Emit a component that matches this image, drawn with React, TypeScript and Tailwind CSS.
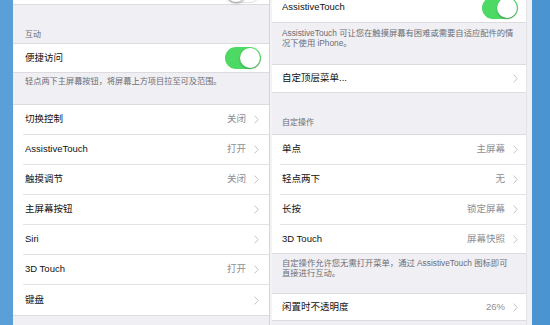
import React from "react";

function Toggle({ on }: { on: boolean }) {
  return on ? (
    <div className="relative h-[22px] w-[36px] shrink-0 rounded-full bg-[#4cd964]">
      <div className="absolute right-[1px] top-[1px] h-[20px] w-[20px] rounded-full bg-white shadow-[0_1px_2px_rgba(0,0,0,0.3)]" />
    </div>
  ) : (
    <div className="relative h-[22px] w-[36px] shrink-0 rounded-full border border-[#e2e2e6] bg-white">
      <div className="absolute left-[0px] top-[0px] h-[20px] w-[20px] rounded-full bg-white shadow-[0_1px_3px_rgba(0,0,0,0.45)]" />
    </div>
  );
}

function Chevron() {
  return (
    <svg width="5" height="9" viewBox="0 0 5 9" className="shrink-0">
      <path d="M0.6 0.6 L4.2 4.5 L0.6 8.4" fill="none" stroke="#c4c4c9" strokeWidth="1" />
    </svg>
  );
}

type RowProps = {
  label: string;
  value?: string;
  chevron?: boolean;
  toggle?: boolean;
  h: string;
  last?: boolean;
  side: "l" | "r";
};

function Row({ label, value, chevron = true, toggle, h, last, side }: RowProps) {
  const pl = side === "l" ? "pl-[10px]" : "pl-[8px]";
  const inner = side === "l" ? "pl-[2px] pr-[10px]" : "pl-[2px] pr-[8px]";
  return (
    <div className={`bg-white ${pl} ${h} ${last ? "border-b border-[#dcdce0]" : ""}`}>
      <div
        className={`flex h-full items-center ${inner} ${last ? "" : "border-b border-[#e3e3e7]"}`}
      >
        <span className="flex-1 text-[9.5px] text-[#111]">{label}</span>
        {value && <span className="mr-[8px] text-[9.5px] text-[#8e8e93]">{value}</span>}
        {toggle !== undefined ? <Toggle on={toggle} /> : chevron ? <Chevron /> : null}
      </div>
    </div>
  );
}

export default function App() {
  return (
    <div className="flex h-[325px] w-[550px] overflow-hidden font-['Liberation_Sans','Noto_Sans_CJK_SC',sans-serif]">
      <div className="w-[13px] shrink-0 bg-[#5a9fd8]" />

      {/* Left panel */}
      <div className="flex w-[256px] shrink-0 flex-col overflow-hidden bg-[#efeff4]">
        <div className="-mt-[26px] flex h-[31px] shrink-0 items-center justify-end border-b border-[#dcdce0] bg-white pr-[8px]">
          <div className="pt-[6px]">
            <Toggle on={false} />
          </div>
        </div>
        <div className="flex h-[38px] shrink-0 items-end pb-[2px] pl-[12px] text-[8px] text-[#6d6d72]">
          互动
        </div>
        <div className="flex h-[30px] shrink-0 items-center border-y border-[#dcdce0] bg-white pl-[12px] pr-[8px]">
          <span className="flex-1 text-[9.5px] text-[#111]">便捷访问</span>
          <Toggle on={true} />
        </div>
        <div className="h-[31px] shrink-0 pl-[12px] pt-[4px] text-[8.2px] leading-[10px] text-[#6d6d72]">
          轻点两下主屏幕按钮，将屏幕上方项目拉至可及范围。
        </div>
        <div className="border-t border-[#dcdce0]">
          <Row side="l" h="h-[30px]" label="切换控制" value="关闭" />
          <Row side="l" h="h-[30px]" label="AssistiveTouch" value="打开" />
          <Row side="l" h="h-[30px]" label="触摸调节" value="关闭" />
          <Row side="l" h="h-[30px]" label="主屏幕按钮" />
          <Row side="l" h="h-[30px]" label="Siri" />
          <Row side="l" h="h-[30px]" label="3D Touch" value="打开" />
          <Row side="l" h="h-[31px]" label="键盘" last />
        </div>
      </div>

      <div className="w-[3px] shrink-0 border-l border-[#d6d6da] bg-[#f3f3f5]" />

      {/* Right panel */}
      <div className="flex w-[254px] shrink-0 flex-col overflow-hidden bg-[#efeff4]">
        <div className="-mt-[7px] flex h-[30px] shrink-0 items-center border-b border-[#dcdce0] bg-white pl-[10px] pr-[8px]">
          <span className="flex-1 text-[9.5px] text-[#111]">AssistiveTouch</span>
          <Toggle on={true} />
        </div>
        <div className="h-[41px] shrink-0 pl-[10px] pr-[6px] pt-[6px] text-[8.3px] leading-[9.5px] text-[#6d6d72]">
          AssistiveTouch 可让您在触摸屏幕有困难或需要自适应配件的情况下使用 iPhone。
        </div>
        <div className="flex h-[29px] shrink-0 items-center border-y border-[#dcdce0] bg-white pl-[10px] pr-[8px]">
          <span className="flex-1 text-[9.5px] text-[#111]">自定顶层菜单...</span>
          <Chevron />
        </div>
        <div className="flex h-[41px] shrink-0 items-end pb-[5px] pl-[10px] text-[8px] text-[#6d6d72]">
          自定操作
        </div>
        <div className="border-t border-[#dcdce0]">
          <Row side="r" h="h-[30px]" label="单点" value="主屏幕" />
          <Row side="r" h="h-[30px]" label="轻点两下" value="无" />
          <Row side="r" h="h-[30px]" label="长按" value="锁定屏幕" />
          <Row side="r" h="h-[29px]" label="3D Touch" value="屏幕快照" last />
        </div>
        <div className="h-[39px] shrink-0 pl-[10px] pr-[6px] pt-[5px] text-[8.3px] leading-[9.5px] text-[#6d6d72]">
          自定操作允许您无需打开菜单，通过 AssistiveTouch 图标即可
          <br />
          直接进行互动。
        </div>
        <div className="flex h-[28px] shrink-0 items-center border-y border-[#dcdce0] bg-white pl-[10px] pr-[8px]">
          <span className="flex-1 text-[9.5px] text-[#111]">闲置时不透明度</span>
          <span className="mr-[8px] text-[9.5px] text-[#8e8e93]">26%</span>
          <Chevron />
        </div>
      </div>

      <div className="w-[6px] shrink-0 border-l border-[#e4e4e8] bg-[#efeff4]" />
      <div className="flex-1 bg-[#4b94d2]" />
    </div>
  );
}
